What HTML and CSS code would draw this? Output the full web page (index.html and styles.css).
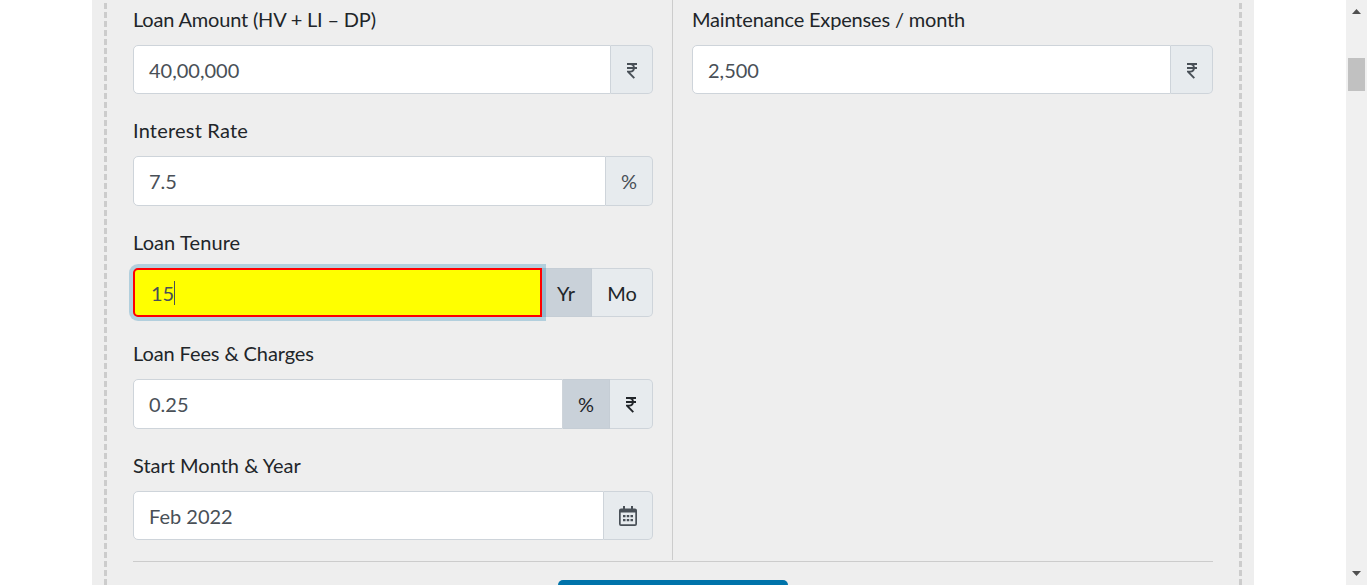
FILE: index.html
```html
<!DOCTYPE html>
<html lang="en">
<head>
<meta charset="utf-8">
<title>Home Loan EMI Calculator</title>
<link rel="stylesheet" href="styles.css">
</head>
<body>
<main class="calculator">
  <div class="dashes"></div>
  <form class="form">
    <div class="columns">
      <section class="column column-loan">
        <div class="field">
          <label class="label label-amount">Loan Amount (HV + LI – DP)</label>
          <div class="group"><div class="input">40,00,000</div><div class="addon addon-rupee"><svg class="rupee" viewBox="0 0 10 16"><path d="M0 1h10M0 5h10M1 1h2.2c5 0 5 7.6 0 7.6H1l6.3 6.6"/></svg></div></div>
        </div>
        <div class="field">
          <label class="label label-rate">Interest Rate</label>
          <div class="group"><div class="input">7.5</div><div class="addon addon-percent">%</div></div>
        </div>
        <div class="field">
          <label class="label label-tenure">Loan Tenure</label>
          <div class="group"><div class="input focused">15<span class="caret"></span></div><div class="addon toggle active addon-year">Yr</div><div class="addon toggle addon-month">Mo</div></div>
        </div>
        <div class="field">
          <label class="label label-fees">Loan Fees &amp; Charges</label>
          <div class="group"><div class="input">0.25</div><div class="addon toggle active addon-percent">%</div><div class="addon toggle addon-rupee"><svg class="rupee" viewBox="0 0 10 16"><path d="M0 1h10M0 5h10M1 1h2.2c5 0 5 7.6 0 7.6H1l6.3 6.6"/></svg></div></div>
        </div>
        <div class="field">
          <label class="label">Start Month &amp; Year</label>
          <div class="group"><div class="input">Feb 2022</div><div class="addon addon-calendar"><svg class="calendar" viewBox="0 0 18 20"><path fill-rule="evenodd" d="M4 0h2v2.5h6V0h2v2.5h2a2 2 0 0 1 2 2V18a2 2 0 0 1-2 2H2a2 2 0 0 1-2-2V4.500a2 2 0 0 1 2-2h2zM1.700 6.500v11.800h14.600V6.500z"/><path d="M4 9h2.500v2.300H4zm3.750 0h2.500v2.300h-2.500zm3.750 0H14v2.300h-2.500zM4 13h2.500v2.300H4zm3.750 0h2.500v2.300h-2.500zm3.750 0H14v2.300h-2.500z"/></svg></div></div>
        </div>
      </section>
      <section class="column column-expenses">
        <div class="field">
          <label class="label label-expenses">Maintenance Expenses / month</label>
          <div class="group"><div class="input">2,500</div><div class="addon addon-rupee"><svg class="rupee" viewBox="0 0 10 16"><path d="M0 1h10M0 5h10M1 1h2.2c5 0 5 7.6 0 7.6H1l6.3 6.6"/></svg></div></div>
        </div>
      </section>
    </div>
    <div class="submit"></div>
  </form>
  <div class="dashes"></div>
</main>
<aside class="scrollbar">
  <svg class="arrow" viewBox="0 0 9 5"><path d="M4.500 0L9 5H0z"/></svg>
  <div class="thumb"></div>
  <svg class="arrow arrow-down" viewBox="0 0 9 5"><path d="M0 0h9L4.500 5z"/></svg>
</aside>
</body>
</html>
```
FILE: styles.css
```css
* { box-sizing: border-box; }
body {
  margin: 0;
  height: 585px;
  overflow: hidden;
  display: flex;
  justify-content: space-between;
  background: #fff;
  color: #212529;
  font: 20px/30px Lato, sans-serif;
}
.calculator {
  width: 1162px;
  height: 585px;
  margin-left: 92px;
  padding: 0 12px;
  display: flex;
  justify-content: space-between;
  background: #eee;
}
.dashes {
  width: 3px;
  background: repeating-linear-gradient(#eee 0 3px, #ccc 3px 9px);
}
.form { width: 1080px; }
.columns {
  display: flex;
  height: 562px;
  padding-bottom: 1px;
  border-bottom: 1px solid #ccc;
}
.column { padding-top: 3.75px; }
.column-loan {
  width: 540px;
  padding-right: 19px;
  border-right: 1px solid #ccc;
}
.column-expenses { width: 540px; padding-left: 19px; }
.field { margin-bottom: 21px; }
.field:last-child { margin-bottom: 0; }
.label { display: block; margin-bottom: 11px; }
.label-amount { letter-spacing: -.19px; }
.label-rate { letter-spacing: .2px; }
.label-tenure { letter-spacing: .1px; }
.label-fees { letter-spacing: -.1px; }
.label-expenses { letter-spacing: -.17px; }
.group { display: flex; height: 49.5px; isolation: isolate; }
.input {
  flex: 1;
  display: flex;
  align-items: center;
  padding: 0 15px;
  background: #fff;
  border: 1px solid #ced4da;
  border-radius: 5px 0 0 5px;
  color: #495057;
}
.focused {
  padding-left: 16px;
  background: #ff0;
  border: 2px solid red;
  box-shadow: 0 0 0 4px rgba(0, 115, 170, .25);
  position: relative;
  z-index: 1;
}
.caret { width: 1px; height: 24px; background: #495057; }
.addon {
  display: flex;
  align-items: center;
  justify-content: center;
  background: #e7ebee;
  border: 1px solid #ced4da;
  border-left: 0;
  color: #495057;
}
.addon:last-child { border-radius: 0 5px 5px 0; }
.toggle { color: #212529; }
.active { background: #c9d1d9; border-color: #c5cdd5; }
.addon-rupee { width: 42px; padding-top: 2px; }
.toggle.addon-rupee { width: 43px; }
.addon-percent { width: 47px; }
.addon-year { width: 50px; padding-right: 1px; }
.addon-month { width: 61px; }
.addon-calendar { width: 49px; }
.rupee {
  width: 10px;
  height: 16px;
  fill: none;
  stroke: currentColor;
  stroke-width: 1.9;
}
.calendar { width: 18px; height: 20px; fill: currentColor; }
.submit {
  width: 230px;
  height: 5px;
  margin: 18px 0 0 425px;
  border-radius: 5px 5px 0 0;
  background: #0073aa;
}
.scrollbar {
  width: 21px;
  height: 585px;
  padding: 9px 2px;
  display: flex;
  flex-direction: column;
  background: #f0f0f0;
}
.arrow { width: 9px; height: 5px; margin-left: 4px; fill: #505050; }
.arrow-down { margin-top: auto; }
.thumb { width: 17px; height: 33px; margin-top: 44px; background: #c1c1c1; }
```
